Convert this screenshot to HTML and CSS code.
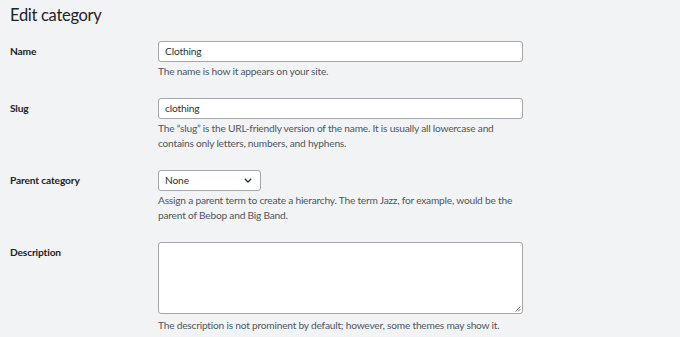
FILE: index.html
```html
<!DOCTYPE html>
<html>
<head>
<meta charset="utf-8">
<link rel="stylesheet" href="styles.css">
</head>
<body>
<div class="wrap">
  <h1 class="title">Edit category</h1>
  <div class="form">
    <div class="label">Name</div>
    <div class="field">
      <div class="input">Clothing</div>
      <p class="desc">The name is how it appears on your site.</p>
    </div>

    <div class="label">Slug</div>
    <div class="field">
      <div class="input">clothing</div>
      <p class="desc">The “slug” is the URL-friendly version of the name. It is usually all lowercase and<br>contains only letters, numbers, and hyphens.</p>
    </div>

    <div class="label">Parent category</div>
    <div class="field">
      <div class="select"><span>None</span>
        <svg class="chev" width="8" height="5" viewBox="0 0 8 5"><path d="M0.8 0.8 L4 4 L7.2 0.8" fill="none" stroke="#2c3338" stroke-width="1.3"/></svg>
      </div>
      <p class="desc">Assign a parent term to create a hierarchy. The term Jazz, for example, would be the<br>parent of Bebop and Big Band.</p>
    </div>

    <div class="label">Description</div>
    <div class="field">
      <div class="textarea">
        <svg class="grip" width="6" height="6" viewBox="0 0 6 6"><path d="M5.5 0.5 L0.5 5.5 M5.5 3 L3 5.5" stroke="#6a6a6a" stroke-width="0.9"/></svg>
      </div>
      <p class="desc desc-ta">The description is not prominent by default; however, some themes may show it.</p>
    </div>
  </div>
</div>
</body>
</html>
```

FILE: styles.css
```css
html, body {
  margin: 0;
  padding: 0;
  background: #f2f3f5;
}
body {
  font-family: Lato, "Noto Sans", sans-serif;
  color: #1d2327;
  font-size: 10.2px;
  letter-spacing: -0.15px;
}
.wrap {
  padding: 0 10px;
}
.title {
  font-size: 16.5px;
  font-weight: 400;
  letter-spacing: -0.3px;
  line-height: 24px;
  margin: 3px 0 14px;
  color: #1d2327;
}
.form {
  display: grid;
  grid-template-columns: 148px 365px;
  row-gap: 19px;
}
.field {
  min-width: 0;
}
.label {
  font-weight: 700;
  line-height: 21px;
}
.input, .select, .textarea {
  box-sizing: border-box;
  background: #fff;
  border: 1px solid #a3a6aa;
  border-radius: 3px;
  color: #2c3338;
}
.input {
  height: 21px;
  line-height: 19px;
  padding: 0 6px;
}
.select {
  width: 103px;
  height: 21px;
  line-height: 19px;
  padding: 0 6px;
  display: flex;
  align-items: center;
  justify-content: space-between;
}
.chev { margin-right: 2px; }
.textarea {
  height: 72px;
  position: relative;
}
.grip {
  position: absolute;
  right: 1px;
  bottom: 1px;
}
.desc {
  margin: 2px 0 0;
  line-height: 15px;
  color: #50575e;
  white-space: nowrap;
  letter-spacing: -0.22px;
}
.desc-ta { margin-top: 4px; }
```
